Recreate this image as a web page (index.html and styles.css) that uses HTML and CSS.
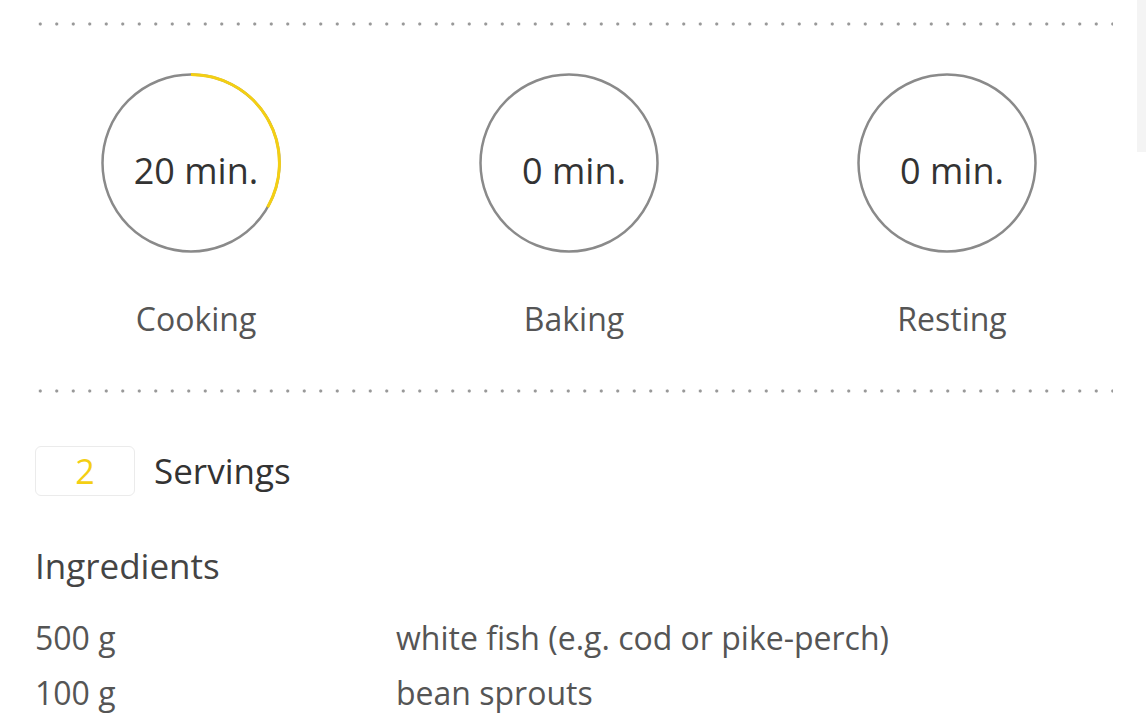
FILE: index.html
```html
<!DOCTYPE html>
<html>
<head>
    <link rel="stylesheet" href="styles.css">
</head>
<body>
    <div class="scroll-thumb"></div>
    <div class="recipe">
        <div class="dots"></div>

        <div class="times">
            <div class="time">
                <div class="dial">
                    <svg viewBox="0 0 180 180">
                        <circle cx="90" cy="90" r="88.5" stroke="#8a8a8a" stroke-width="2.5" fill="none"></circle>
                        <!-- 20 of 60 minutes -->
                        <path d="M90 1.5 A88.5 88.5 0 0 1 166.6 134.2" stroke="#f4cf13" stroke-width="3" fill="none"/>
                    </svg>
                    <span class="dial-value">20 min.</span>
                </div>
                <p class="time-label">Cooking</p>
            </div>
            <div class="time">
                <div class="dial">
                    <svg viewBox="0 0 180 180">
                        <circle cx="90" cy="90" r="88.5" stroke="#8a8a8a" stroke-width="2.5" fill="none"></circle>
                    </svg>
                    <span class="dial-value">0 min.</span>
                </div>
                <p class="time-label">Baking</p>
            </div>
            <div class="time">
                <div class="dial">
                    <svg viewBox="0 0 180 180">
                        <circle cx="90" cy="90" r="88.5" stroke="#8a8a8a" stroke-width="2.5" fill="none"></circle>
                    </svg>
                    <span class="dial-value">0 min.</span>
                </div>
                <p class="time-label">Resting</p>
            </div>
        </div>

        <div class="dots"></div>

        <div class="servings">
            <span class="servings-box">2</span>
            <span class="servings-label">Servings</span>
        </div>

        <h2 class="ingredients-title">Ingredients</h2>
        <ul class="ingredients">
            <li><span class="amount">500 g</span><span class="name">white fish (e.g. cod or pike-perch)</span></li>
            <li><span class="amount">100 g</span><span class="name">bean sprouts</span></li>
        </ul>
    </div>
</body>
</html>
```

FILE: styles.css
```css
body {
    margin: 0;
    background: #fff;
    font-family: "Open Sans", "Noto Sans", sans-serif;
    color: #444;
    overflow: hidden;
}
.scroll-thumb {
    position: absolute;
    top: 0;
    right: 0;
    width: 9px;
    height: 152px;
    background-color: #f4f4f4;
}
.recipe {
    padding: 0 33px 0 35px;
}
.dots {
    height: 4px;
    background-image: radial-gradient(circle, #999 1.3px, transparent 1.9px);
    background-size: 16.5px 4px;
    background-position: -3px 0;
    background-repeat: repeat-x;
}
.recipe > .dots:first-child {
    margin-top: 22px;
}
.times {
    display: grid;
    grid-template-columns: repeat(3, 378px);
    margin: 47px 0 0 -33px;
}
.time {
    display: flex;
    flex-direction: column;
    align-items: center;
}
.dial {
    position: relative;
    width: 180px;
    height: 180px;
}
.dial svg {
    display: block;
    width: 100%;
    height: 100%;
}
.dial-value {
    position: absolute;
    top: 0;
    left: 0;
    right: 0;
    bottom: 0;
    display: flex;
    align-items: center;
    justify-content: center;
    padding: 16px 0 0 10px;
    font-size: 36px;
    line-height: 44px;
    color: #333;
}
.time-label {
    margin: 46px 0 0;
    padding-left: 10px;
    font-size: 32px;
    line-height: 40px;
    color: #555;
}
.times + .dots {
    margin-top: 50px;
}
.servings {
    display: flex;
    align-items: center;
    margin-top: 53px;
}
.servings-box {
    width: 98px;
    height: 48px;
    border: 1px solid #ebebeb;
    border-radius: 6px;
    display: flex;
    align-items: center;
    justify-content: center;
    font-size: 34px;
    color: #f4cf13;
}
.servings-label {
    margin-left: 19px;
    font-size: 35px;
    line-height: 44px;
    color: #333;
}
.ingredients-title {
    margin: 48px 0 0;
    font-size: 35px;
    font-weight: normal;
    line-height: 44px;
    color: #444;
}
.ingredients {
    list-style: none;
    margin: 22px 0 0;
    padding: 0;
}
.ingredients li {
    display: flex;
    font-size: 32px;
    line-height: 55px;
    color: #555;
}
.amount {
    width: 361px;
}
```
